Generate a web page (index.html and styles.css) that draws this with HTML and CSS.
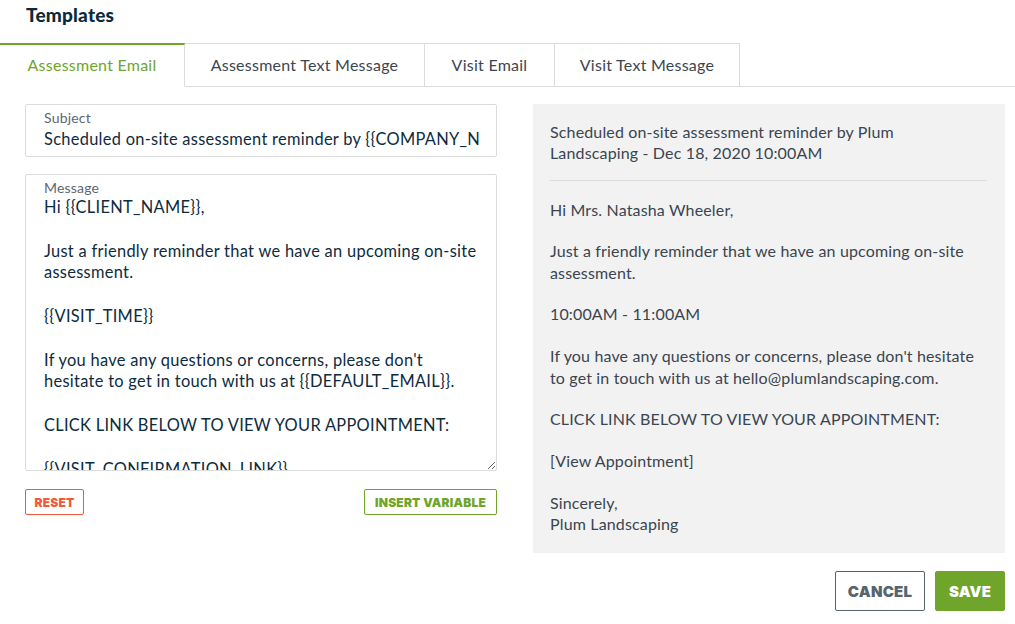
FILE: index.html
```html
<!DOCTYPE html>
<html>
<head>
<meta charset="utf-8">
<link rel="stylesheet" href="styles.css">
</head>
<body>
<div class="page">
  <h1 class="title">Templates</h1>
  <div class="tabs">
    <div class="tab active">Assessment Email</div>
    <div class="tab">Assessment Text Message</div>
    <div class="tab">Visit Email</div>
    <div class="tab">Visit Text Message</div>
    <div class="tab-fill"></div>
  </div>
  <div class="content">
    <div class="editor">
      <div class="field subject">
        <label class="field-label">Subject</label>
        <input class="field-input" type="text" value="Scheduled on-site assessment reminder by {{COMPANY_NAME}} - {{VISIT_DATE}}">
      </div>
      <div class="field message">
        <label class="field-label">Message</label>
        <textarea class="field-area">Hi {{CLIENT_NAME}},

Just a friendly reminder that we have an upcoming on-site assessment.

{{VISIT_TIME}}

If you have any questions or concerns, please don't hesitate to get in touch with us at {{DEFAULT_EMAIL}}.

CLICK LINK BELOW TO VIEW YOUR APPOINTMENT:

{{VISIT_CONFIRMATION_LINK}}

Sincerely,
{{COMPANY_NAME}}</textarea>
      </div>
      <div class="editor-actions">
        <button class="btn-small reset">RESET</button>
        <button class="btn-small insert">INSERT VARIABLE</button>
      </div>
    </div>
    <div class="preview">
      <div class="preview-subject">Scheduled on-site assessment reminder by Plum Landscaping - Dec 18, 2020 10:00AM</div>
      <div class="preview-body">
        <p>Hi Mrs. Natasha Wheeler,</p>
        <p>Just a friendly reminder that we have an upcoming on-site assessment.</p>
        <p>10:00AM - 11:00AM</p>
        <p>If you have any questions or concerns, please don't hesitate to get in touch with us at hello@plumlandscaping.com.</p>
        <p>CLICK LINK BELOW TO VIEW YOUR APPOINTMENT:</p>
        <p>[View Appointment]</p>
        <p>Sincerely,<br>Plum Landscaping</p>
      </div>
    </div>
  </div>
  <div class="footer">
    <button class="btn cancel">CANCEL</button>
    <button class="btn save">SAVE</button>
  </div>
</div>
</body>
</html>
```

FILE: styles.css
```css
* { box-sizing: border-box; }
html, body { margin: 0; padding: 0; background: #fff; }
body {
  font-family: "Lato", "Noto Sans", sans-serif;
  color: #0d2b3e;
  width: 1015px;
  height: 624px;
  overflow: hidden;
}
.page { display: flex; flex-direction: column; }
.title {
  margin: 0;
  padding: 4px 0 0 26px;
  height: 43px;
  font-size: 19px;
  font-weight: 900;
  color: #0b2a3b;
  line-height: 22px;
  letter-spacing: 0.2px;
}
.tabs {
  display: flex;
  height: 44px;
}
.tab {
  display: flex;
  align-items: center;
  justify-content: center;
  font-size: 16px;
  letter-spacing: 0.25px;
  color: #3b4650;
  border-top: 1px solid #dcdcdc;
  border-right: 1px solid #dcdcdc;
  border-bottom: 1px solid #dcdcdc;
  padding-bottom: 2px;
}
.tab:nth-child(1) { width: 185px; }
.tab:nth-child(2) { width: 240px; }
.tab:nth-child(3) { width: 130px; }
.tab:nth-child(4) { width: 185px; }
.tab.active {
  color: #6ea52a;
  border-top: 2px solid #6ea52a;
  border-bottom-color: transparent;
  padding-bottom: 3px;
}
.tab-fill { flex: 1; border-bottom: 1px solid #dcdcdc; }
.content {
  display: flex;
  gap: 36px;
  padding: 17px 10px 0 25px;
}
.editor { width: 472px; display: flex; flex-direction: column; }
.field {
  border: 1px solid #dcdcdc;
  border-radius: 2px;
  display: flex;
  flex-direction: column;
  padding: 5px 0 0 18px;
}
.subject { height: 53px; }
.message { height: 297px; margin-top: 17px; padding-right: 0; }
.field-label {
  font-size: 14px;
  line-height: 16px;
  color: #5d6770;
  letter-spacing: 0.2px;
}
.field-input {
  border: none;
  outline: none;
  font-family: inherit;
  font-size: 16.4px;
  letter-spacing: 0.3px;
  color: #0d2b3e;
  padding: 0;
  margin-top: 1px;
  width: 436px;
  height: 22px;
  background: transparent;
}
.field-area {
  border: none;
  outline: none;
  font-family: inherit;
  font-size: 16.4px;
  letter-spacing: 0.3px;
  line-height: 21.8px;
  color: #0d2b3e;
  padding: 0 18px 0 0;
  margin: 0;
  flex: 1;
  resize: both;
  overflow: hidden;
  background: transparent;
  width: 100%;
}
.editor-actions {
  display: flex;
  justify-content: space-between;
  margin-top: 18px;
}
.btn-small {
  font-family: "Inter", "DejaVu Sans", sans-serif;
  font-weight: 900;
  font-size: 12px;
  height: 26px;
  background: #fff;
  border-radius: 2px;
  padding: 0 6px;
  letter-spacing: 0.2px;
}
.reset { color: #ef5a3c; border: 1px solid #ef5a3c; width: 59px; }
.insert { color: #6ea52a; border: 1px solid #6ea52a; width: 133px; }
.preview {
  width: 472px;
  height: 449px;
  background: #f2f2f2;
  padding: 17px 15px 0 17px;
  color: #3a4550;
  font-size: 16px;
  letter-spacing: 0.15px;
  line-height: 21.3px;
}
.preview-subject {
  margin-right: 3px;
  padding-right: 20px;
  padding-bottom: 16px;
  border-bottom: 1px solid #dcdcdc;
}
.preview-body { padding-top: 18px; }
.preview-body p { margin: 0 0 20.5px; }
.footer {
  display: flex;
  justify-content: flex-end;
  gap: 10px;
  padding: 18px 10px 0 0;
}
.btn {
  font-family: "Inter", "DejaVu Sans", sans-serif;
  font-weight: 900;
  font-size: 15px;
  height: 40px;
  border-radius: 2px;
  letter-spacing: 0.2px;
  padding: 0;
}
.cancel { width: 90px; background: #fff; color: #56646e; border: 1px solid #56646e; }
.save { width: 70px; background: #6ea52a; color: #fff; border: 1px solid #6ea52a; }
```
